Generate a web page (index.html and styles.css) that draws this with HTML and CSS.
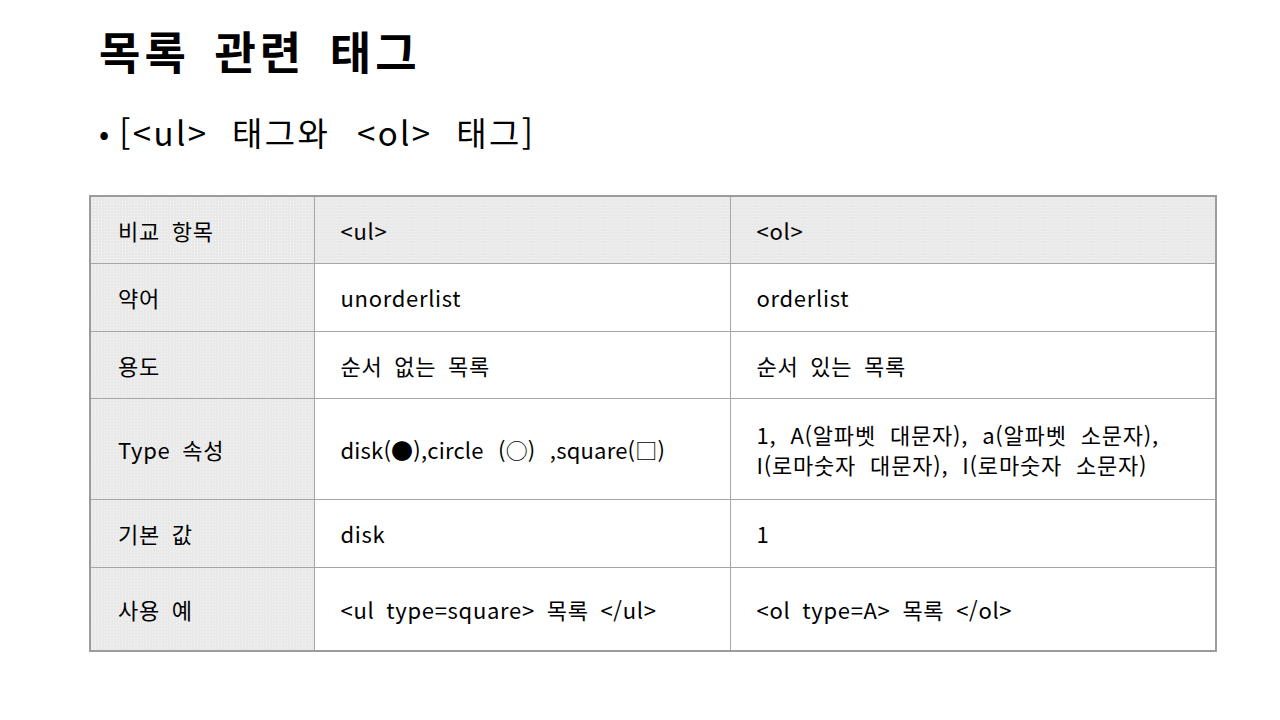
FILE: index.html
```html
<!DOCTYPE html>
<html lang="ko">
<head>
<meta charset="utf-8">
<link rel="stylesheet" href="styles.css">
</head>
<body>
<div class="slide">
  <h1 class="title">목록 관련 태그</h1>
  <p class="bullet"><span class="dot">•</span>[&lt;ul&gt; 태그와 <span class="wide">&lt;ol&gt;</span> 태그]</p>
  <table class="cmp">
    <colgroup><col class="c1"><col class="c2"><col class="c3"></colgroup>
    <tr class="r1 head"><td class="lab">비교 항목</td><td>&lt;ul&gt;</td><td>&lt;ol&gt;</td></tr>
    <tr class="r2"><td class="lab">약어</td><td>unorderlist</td><td>orderlist</td></tr>
    <tr class="r3"><td class="lab">용도</td><td>순서 없는 목록</td><td>순서 있는 목록</td></tr>
    <tr class="r4"><td class="lab">Type 속성</td><td class="sym">disk(●),circle (○) ,square(□)</td><td class="tight">1, A(알파벳 대문자), a(알파벳 소문자),<br>I(로마숫자 대문자), I(로마숫자 소문자)</td></tr>
    <tr class="r5"><td class="lab">기본 값</td><td>disk</td><td>1</td></tr>
    <tr class="r6"><td class="lab">사용 예</td><td>&lt;ul type=square&gt; 목록 &lt;/ul&gt;</td><td>&lt;ol type=A&gt; 목록 &lt;/ol&gt;</td></tr>
  </table>
</div>
</body>
</html>
```
FILE: styles.css
```css
html, body {
  margin: 0;
  padding: 0;
  background: #fff;
}
body {
  font-family: "Noto Sans CJK KR", "Noto Sans", sans-serif;
  color: #000;
}
.slide {
  width: 1280px;
  height: 720px;
  padding: 20px 0 0 89px;
  box-sizing: border-box;
}
.title {
  margin: 0 0 0 10px;
  font-size: 45px;
  font-weight: 700;
  line-height: 62px;
  letter-spacing: 4px;
  word-spacing: 8px;
}
.bullet {
  margin: 30px 0 0 10px;
  font-size: 33px;
  line-height: 40px;
  letter-spacing: 2.4px;
  word-spacing: 12px;
  display: flex;
  align-items: center;
  white-space: pre;
}
.dot {
  font-size: 30px;
  margin-right: 10px;
  letter-spacing: 0;
}
.wide {
  margin-left: 3px;
}
.cmp {
  margin-top: 43px;
  width: 1126px;
  border-collapse: collapse;
  table-layout: fixed;
  border: 2px solid #9c9c9c;
  font-size: 22px;
  letter-spacing: 0.7px;
  word-spacing: 5px;
}
.c1 { width: 224px; }
.c2 { width: 416px; }
.c3 { width: 486px; }
.cmp td {
  border: 1px solid #a6a6a6;
  padding: 0 0 0 26px;
  vertical-align: middle;
  line-height: 28px;
  white-space: nowrap;
}
.cmp td.lab {
  padding-left: 27px;
}
.cmp td.lab,
.cmp tr.head td {
  background-color: #e9e9e9;
  background-image: radial-gradient(circle, #f7f7f7 0.7px, transparent 0.9px);
  background-size: 3px 3px;
}
.cmp td.sym {
  letter-spacing: 0.2px;
  word-spacing: 8px;
}
.cmp td.tight {
  line-height: 30px;
  letter-spacing: 0.8px;
  word-spacing: 7px;
}
.r1 { height: 67px; }
.r2 { height: 68px; }
.r3 { height: 67px; }
.r4 { height: 101px; }
.r5 { height: 68px; }
.r6 { height: 84px; }
```
